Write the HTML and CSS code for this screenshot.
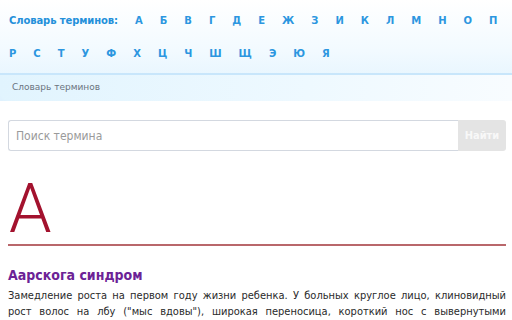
FILE: index.html
```html
<!DOCTYPE html>
<html lang="ru">
<head>
<meta charset="utf-8">
<link rel="stylesheet" href="styles.css">
</head>
<body>
<header class="top">
  <nav class="alphabet">
    <span class="label">Словарь терминов:</span>
    <a>А</a><a>Б</a><a>В</a><a>Г</a><a>Д</a><a>Е</a><a>Ж</a><a>З</a><a>И</a><a>К</a><a>Л</a><a>М</a><a>Н</a><a>О</a><a>П</a>
    <a>Р</a><a>С</a><a>Т</a><a>У</a><a>Ф</a><a>Х</a><a>Ц</a><a>Ч</a><a>Ш</a><a>Щ</a><a>Э</a><a>Ю</a><a>Я</a>
  </nav>
  <div class="crumbs">Словарь терминов</div>
</header>
<main class="content">
  <form class="search">
    <input class="search-input" type="text" placeholder="Поиск термина">
    <button class="search-btn" type="button">Найти</button>
  </form>
  <div class="letter">А</div>
  <article class="entry">
    <h2 class="term">Аарскога синдром</h2>
    <p class="desc">Замедление роста на первом году жизни ребенка. У больных круглое лицо, клиновидный рост волос на лбу ("мыс вдовы"), широкая переносица, короткий нос с вывернутыми</p>
    <span class="more"></span>
  </article>
</main>
</body>
</html>
```
FILE: styles.css
```css
html, body { margin: 0; padding: 0; background: #fff; }
body { font-family: "DejaVu Sans", Verdana, sans-serif; overflow: hidden; }

.top {
  background: linear-gradient(to bottom, #ffffff 0%, #f2faff 50%, #dff2fe 100%);
}
.alphabet {
  display: flex;
  flex-wrap: wrap;
  column-gap: 17px;
  padding: 4px 0 3px 9px;
  border-bottom: 2px solid #c8e6fb;
  font-family: "DejaVu Sans", sans-serif;
  font-weight: bold;
  font-size: 10px;
  line-height: 33px;
  color: #2490da;
}
.alphabet .label { letter-spacing: -0.1px; }
.alphabet a { color: #2c96e0; cursor: pointer; }
.crumbs {
  height: 26px;
  line-height: 25px;
  padding-left: 12px;
  font-size: 9px;
  color: #6b7480;
  background: linear-gradient(to right, #e1f4fe 0%, #eef9ff 60%, #f8fcff 100%);
  border-bottom-left-radius: 8px;
}
.content { padding: 19px 6px 0 8px; }
.search { display: flex; height: 31px; }
.search-input {
  flex: 1;
  box-sizing: border-box;
  height: 31px;
  margin: 0;
  border: 1px solid #d3d8e0;
  border-right: none;
  border-radius: 3px 0 0 3px;
  padding: 0 7px;
  font-family: "DejaVu Sans Condensed", "DejaVu Sans", sans-serif;
  font-size: 12px;
  color: #333;
  outline: none;
}
.search-input::placeholder { color: #9a9a9a; }
.search-btn {
  width: 48px;
  height: 31px;
  margin: 0;
  border: none;
  border-radius: 0 3px 3px 0;
  background: #e4e4e4;
  color: #f8f8f8;
  font-family: "DejaVu Sans Condensed", "DejaVu Sans", sans-serif;
  font-weight: bold;
  font-size: 11px;
  padding: 0;
}
.letter {
  margin-top: 23px;
  font-family: Roboto, sans-serif;
  font-weight: 300;
  font-size: 68px;
  line-height: 70px;
  color: #a3122e;
  padding-left: 1px;
  border-bottom: 2px solid #b9676b;
}
.entry { position: relative; }
.term {
  margin: 20px 0 4px;
  font-family: "DejaVu Sans Condensed", "DejaVu Sans", sans-serif;
  font-weight: bold;
  font-size: 14px;
  line-height: 18px;
  color: #6c2296;
}
.desc {
  margin: 0;
  font-family: "DejaVu Sans Condensed", "DejaVu Sans", sans-serif;
  font-size: 11px;
  line-height: 16px;
  color: #2a2a2a;
  text-align: justify;
  text-align-last: justify;
}
.more {
  position: absolute;
  left: 237px;
  top: 54px;
  width: 60px;
  height: 8px;
  background: #e2e2e2;
  border-radius: 2px;
}
```
